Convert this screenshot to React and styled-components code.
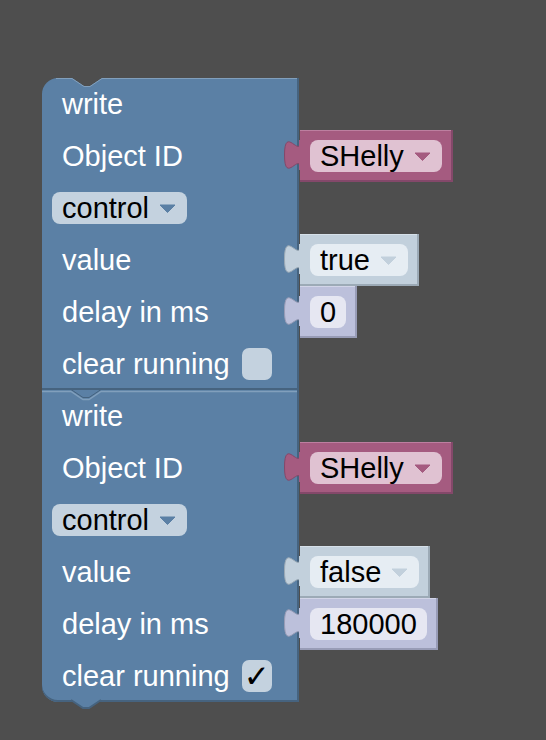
import React from 'react';
import styled, { createGlobalStyle } from 'styled-components';

const GlobalStyle = createGlobalStyle`
  body {
    margin: 0;
    background: #4e4e4e;
    font-family: "Liberation Sans", Arial, sans-serif;
  }
`;

const BLOCK = '#5b80a5';
const BLOCK_DARK = '#46637f';
const BLOCK_LIGHT = '#819fbc';
const BG = '#4e4e4e';

const kinds = {
  object: { bg: '#a55b80', dark: '#84486a', light: '#bd7fa0', field: '#e0c2d2', arrow: '#a55b80' },
  logic: { bg: '#c2d0dc', dark: '#9caab6', light: '#d6e0e9', field: '#e6edf3', arrow: '#c2d0dc' },
  number: { bg: '#bcc0db', dark: '#989cb6', light: '#d2d5e8', field: '#e6e7f2', arrow: '#bcc0db' },
};

const Workspace = styled.div`
  min-height: 740px;
  padding: 78px 0 0 42px;
  box-sizing: border-box;
`;

const Stack = styled.div`
  display: flex;
  flex-direction: column;
  width: 257px;
`;

const Block = styled.div`
  position: relative;
  width: 257px;
  background: ${BLOCK};
  border-radius: ${(p) => (p.$first ? '16px 0 0 0' : '0 0 0 16px')};
  box-shadow: inset -2px 0 ${BLOCK_DARK}, inset 0 -2px ${BLOCK_DARK};
  color: #fff;
`;

const Edge = styled.svg`
  position: absolute;
  left: 0;
  top: ${(p) => p.$top || '0'};
  overflow: visible;
  pointer-events: none;
`;

const Row = styled.div`
  display: flex;
  align-items: center;
  gap: 12px;
  height: 52px;
  padding-left: ${(p) => (p.$field ? '10px' : '20px')};
  font-size: 29px;
  line-height: 1;
`;

const Label = styled.span`
  white-space: nowrap;
`;

const Socket = styled.div`
  display: flex;
  align-self: stretch;
  width: 0;
  margin-left: auto;
`;

const ValueBlock = styled.div`
  position: relative;
  flex: none;
  display: flex;
  align-items: flex-start;
  box-sizing: border-box;
  height: 52px;
  margin-left: 1px;
  padding: 10px 11px 0 10px;
  background: ${(p) => kinds[p.$kind].bg};
  box-shadow: inset -2px -2px ${(p) => kinds[p.$kind].dark}, inset 0 1px ${(p) => kinds[p.$kind].light};
`;

const Tab = styled.svg`
  position: absolute;
  left: -16px;
  top: 10px;
  overflow: visible;
`;

const Field = styled.div`
  display: flex;
  align-items: center;
  gap: 10px;
  height: 32px;
  padding: 0 ${(p) => (p.$arrow ? '11px' : '10px')} 0 10px;
  border-radius: 8px;
  background: ${(p) => p.$bg};
  color: #000;
  font-size: 29px;
  white-space: nowrap;
`;

const Checkbox = styled.div`
  display: flex;
  align-items: center;
  justify-content: center;
  width: 30px;
  height: 32px;
  border-radius: 7px;
  background: #c4d2df;
  color: #000;
  font-family: "DejaVu Sans", sans-serif;
  font-weight: bold;
  font-size: 31px;
  line-height: 1;
`;

const Arrow = ({ color }) => (
  <svg width="17" height="9" viewBox="0 0 17 9">
    <path d="M1 1 H16 L8.5 8.5 Z" fill={color} stroke={color} strokeLinejoin="round" />
  </svg>
);

const Value = ({ kind, text, dropdown }) => {
  const k = kinds[kind];
  return (
    <Socket>
      <ValueBlock $kind={kind}>
        <Tab width="17" height="30" viewBox="0 0 17 30">
          <path d="M16.5 30 C16.5 10 0.5 46 0.5 15 S16.5 20 16.5 0 Z" fill={k.bg} stroke={k.dark} strokeWidth="1" />
          <rect x="15" y="0" width="3" height="30" fill={k.bg} />
        </Tab>
        <Field $bg={k.field} $arrow={dropdown}>
          {text}
          {dropdown && <Arrow color={k.arrow} />}
        </Field>
      </ValueBlock>
    </Socket>
  );
};

const WriteBlock = ({ first, value, valueKind, delay, checked }) => (
  <Block $first={first}>
    {first ? (
      <Edge width="257" height="10" $top="0">
        <path d="M29 -1 L30 0 L42 8 H48 L60 0 L61 -1 Z" fill={BG} />
        <path d="M14 0.5 H30 L42 8.5 H48 L60 0.5 H255" fill="none" stroke={BLOCK_LIGHT} strokeWidth="1" />
      </Edge>
    ) : (
      <Edge width="257" height="12" $top="0">
        <path d="M0 1.5 H29 L41 9.5 H47 L59 1.5 H255" fill="none" stroke={BLOCK_LIGHT} strokeWidth="1.5" />
        <path d="M29 -0.5 L41 7.5 H47 L59 -0.5" fill="none" stroke={BLOCK_DARK} strokeWidth="1" />
      </Edge>
    )}
    <Row>
      <Label>write</Label>
    </Row>
    <Row>
      <Label>Object ID</Label>
      <Value kind="object" text="SHelly" dropdown />
    </Row>
    <Row $field>
      <Field $bg="#c4d2df" $arrow>
        control
        <Arrow color={BLOCK} />
      </Field>
    </Row>
    <Row>
      <Label>value</Label>
      <Value kind={valueKind} text={value} dropdown />
    </Row>
    <Row>
      <Label>delay in ms</Label>
      <Value kind="number" text={delay} />
    </Row>
    <Row>
      <Label>clear running</Label>
      <Checkbox>{checked ? '✓' : ''}</Checkbox>
    </Row>
    {!first && (
      <Edge width="32" height="10" $top="calc(100% - 2px)">
        <path d="M29 0 L41 8 H47 L59 0 Z" fill={BLOCK} />
        <path d="M29 0 L41 8 H47 L59 0" fill="none" stroke={BLOCK_DARK} strokeWidth="2" />
      </Edge>
    )}
  </Block>
);

export default function App() {
  return (
    <>
      <GlobalStyle />
      <Workspace>
        <Stack>
          <WriteBlock first value="true" valueKind="logic" delay="0" />
          <WriteBlock value="false" valueKind="logic" delay="180000" checked />
        </Stack>
      </Workspace>
    </>
  );
}
